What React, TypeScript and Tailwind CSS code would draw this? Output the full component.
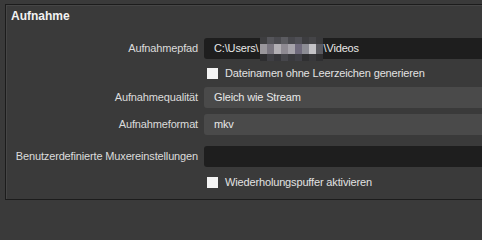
const font = { fontFamily: '"Liberation Sans", Arial, sans-serif' };

const mosaic = [
  ["#3e3e40", "#55555a", "#4a4a4f", "#5b5b60", "#47474c", "#4f4f55", "#3d3d40", "#454548", "#3a3a3c"],
  ["#9a979c", "#7a7680", "#b2afb4", "#8e8a92", "#a6a3aa", "#6f6a7c", "#8c8c94", "#c3c2c6", "#5a5a60"],
  ["#2e2e30", "#3f3f44", "#36363a", "#46464b", "#3a3a3e", "#404046", "#303032", "#38383b", "#2f2f31"],
];

function Mosaic() {
  return (
    <span className="mx-[1px] inline-flex h-[24px] flex-col align-middle">
      {mosaic.map((row, i) => (
        <span key={i} className={i === 1 ? "flex h-[10px]" : "flex h-[7px]"}>
          {row.map((c, j) => (
            <span key={j} className="h-full w-[7px]" style={{ background: c }} />
          ))}
        </span>
      ))}
    </span>
  );
}

function Label({ children }: { children: React.ReactNode }) {
  return (
    <div className="w-[193px] shrink-0 pr-[1px] text-right text-[#dcdcdc]">{children}</div>
  );
}

function Check({ text }: { text: string }) {
  return (
    <div className="flex h-[20px] items-center">
      <div className="w-[199px] shrink-0" />
      <div className="flex items-center gap-[7px] pl-[2px]">
        <span className="h-[11px] w-[11px] bg-[#f4f4f4]" />
        <span className="text-[#e2e2e2]">{text}</span>
      </div>
    </div>
  );
}

export default function App() {
  return (
    <div
      className="h-screen min-h-[210px] w-full min-w-[482px] overflow-hidden bg-[#3a3a3a] text-[11px] tracking-[-0.15px]"
      style={font}
    >
      <div className="ml-[5px] mt-[4px] h-[196px] border-b border-l border-t border-[#1c1c1c] shadow-[inset_1px_1px_0_#464646]">
        <div className="pl-[5px] pt-[4px] text-[12px] font-bold leading-[15px] tracking-normal text-[#f2f2f2]">
          Aufnahme
        </div>

        <div className="mt-[14px] flex h-[21px] items-center">
          <Label>Aufnahmepfad</Label>
          <div className="ml-[5px] flex h-full flex-1 items-center rounded-l-[3px] bg-[#1e1e1e] pl-[10px] text-[#e8e8e8]">
            <span>C:\Users\</span>
            <Mosaic />
            <span>\Videos</span>
          </div>
        </div>

        <div className="mt-[4px]">
          <Check text="Dateinamen ohne Leerzeichen generieren" />
        </div>

        <div className="mt-[4px] flex h-[21px] items-center">
          <Label>Aufnahmequalität</Label>
          <div className="ml-[5px] flex h-full flex-1 items-center rounded-l-[3px] bg-[#4a4a4a] pl-[10px] text-[#e8e8e8]">
            Gleich wie Stream
          </div>
        </div>

        <div className="mt-[6px] flex h-[21px] items-center">
          <Label>Aufnahmeformat</Label>
          <div className="ml-[5px] flex h-full flex-1 items-center rounded-l-[3px] bg-[#4a4a4a] pl-[10px] text-[#e8e8e8]">
            mkv
          </div>
        </div>

        <div className="mt-[11px] flex h-[21px] items-center">
          <Label>Benutzerdefinierte Muxereinstellungen</Label>
          <div className="ml-[5px] h-full flex-1 rounded-l-[3px] bg-[#1e1e1e]" />
        </div>

        <div className="mt-[5px]">
          <Check text="Wiederholungspuffer aktivieren" />
        </div>
      </div>
    </div>
  );
}
